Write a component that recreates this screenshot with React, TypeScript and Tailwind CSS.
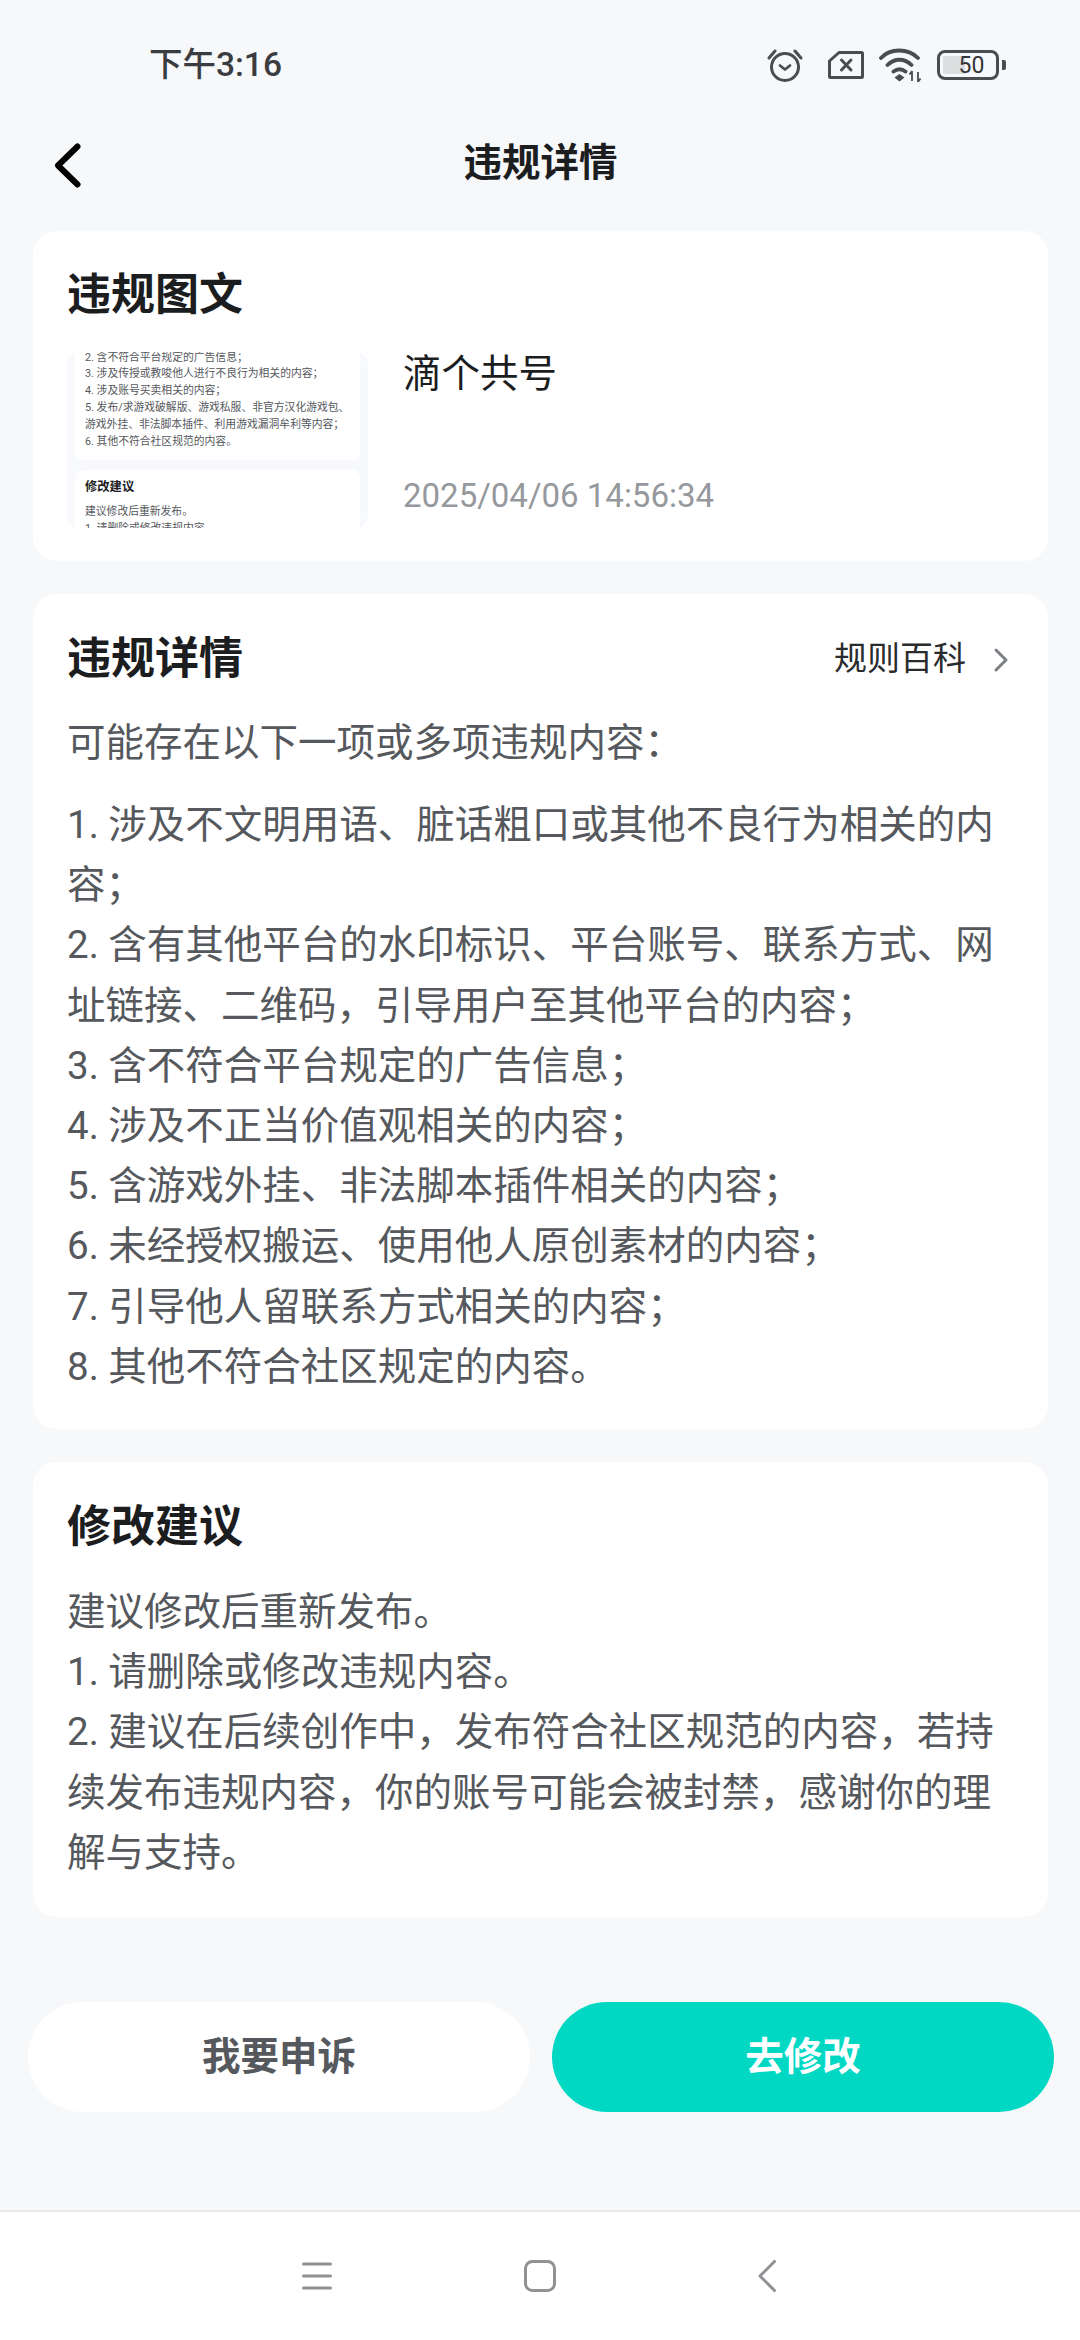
import React from "react";

const font = { fontFamily: '"Roboto", "Noto Sans CJK SC", sans-serif' };

const rules = [
  "1. 涉及不文明用语、脏话粗口或其他不良行为相关的内容；",
  "2. 含有其他平台的水印标识、平台账号、联系方式、网址链接、二维码，引导用户至其他平台的内容；",
  "3. 含不符合平台规定的广告信息；",
  "4. 涉及不正当价值观相关的内容；",
  "5. 含游戏外挂、非法脚本插件相关的内容；",
  "6. 未经授权搬运、使用他人原创素材的内容；",
  "7. 引导他人留联系方式相关的内容；",
  "8. 其他不符合社区规定的内容。",
];

const thumb = [
  "2. 含不符合平台规定的广告信息；",
  "3. 涉及传授或教唆他人进行不良行为相关的内容；",
  "4. 涉及账号买卖相关的内容；",
  "5. 发布/求游戏破解版、游戏私服、非官方汉化游戏包、",
  "游戏外挂、非法脚本插件、利用游戏漏洞牟利等内容；",
  "6. 其他不符合社区规范的内容。",
];

function StatusIcons() {
  return (
    <div className="flex items-center gap-[15px] text-[#4a4c50]">
      <svg width="36" height="35" viewBox="0 0 36 35" fill="none" stroke="currentColor" strokeLinecap="round" strokeLinejoin="round" className="mr-[10px]">
        <circle cx="18" cy="19" r="13.500" strokeWidth="3" />
        <path d="M13 17.500l5 4 5-4" strokeWidth="2.800" />
        <path d="M2 10l6-7M34 10l-6-7" strokeWidth="3" />
      </svg>
      <svg width="36" height="28" viewBox="0 0 36 28" fill="none" stroke="currentColor" strokeWidth="3" strokeLinejoin="round" strokeLinecap="round">
        <path d="M11 1.500h22.500a1 1 0 0 1 1 1v23a1 1 0 0 1-1 1H2.500a1 1 0 0 1-1-1V10z" />
        <path d="M13.500 9l9.500 10M23 9l-9.500 10" />
      </svg>
      <svg width="43" height="34" viewBox="0 0 43 34" fill="none">
        <path d="M2 10C11 0 29 0 39 10M8.500 17c7-7 17-7 24 0M14.500 23.500c4-3 8-3 12 0" stroke="currentColor" strokeWidth="3.800" strokeLinecap="round" />
        <path d="M20.500 26l5 3.500-5 4-5-4z" fill="currentColor" />
        <path d="M33 23v10M39 24v10M33 23l-2.500 3.500M39 34l2.500-3.500" stroke="currentColor" strokeWidth="1.800" />
      </svg>
      <div className="flex items-center">
        <div className="relative flex h-[30px] w-[62px] items-center justify-center rounded-[8px] border-[3.500px] border-[#4a4c50]">
          <div className="absolute left-[3px] top-[3px] bottom-[3px] w-[22px] bg-[#dcdee0]" />
          <span className="relative pl-[7px] text-[23px] leading-none text-[#333538]" style={font}>50</span>
        </div>
        <div className="ml-[3px] h-[10px] w-[4px] rounded-r-[2px] bg-[#4a4c50]" />
      </div>
    </div>
  );
}

export default function App() {
  return (
    <div className="flex h-[2340px] w-[1080px] flex-col overflow-hidden bg-[#f7f8fa]" style={font}>
      <div className="flex h-[128px] items-center justify-between pl-[149px] pr-[74px] pt-[2px]">
        <span className="text-[33.500px] font-medium text-[#3a3c40]">下午3:16</span>
        <StatusIcons />
      </div>

      <div className="relative flex h-[70px] items-center justify-center">
        <svg width="27" height="45" viewBox="0 0 27 45" fill="none" className="absolute left-[54px] top-[15px]">
          <path d="M23.500 3.500L4 22.500l19.500 19" stroke="#000" strokeWidth="6" strokeLinecap="round" strokeLinejoin="round" />
        </svg>
        <span className="pl-[1px] text-[38.500px] font-bold leading-none text-[#1c1d1f]">违规详情</span>
      </div>

      <div className="flex flex-col gap-[33px] pl-[33px] pr-[32px] pt-[33px]">
        <section className="h-[330px] rounded-[24px] bg-white px-[34px] pt-[34px]">
          <h2 className="text-[44px] font-bold leading-[60px] text-[#1c1d1f]">违规图文</h2>
          <div className="mt-[27px] flex">
            <div className="h-[176px] w-[301px] shrink-0 overflow-hidden rounded-[12px] bg-[#f7f9fc] px-[8px]">
              <div className="-mt-[2.400px] rounded-b-[8px] bg-white pb-[10px] pl-[10px]">
                {thumb.map((t) => (
                  <p key={t} className="whitespace-nowrap text-[10.800px] leading-[16.800px] text-[#55585c]">{t}</p>
                ))}
              </div>
              <div className="mt-[10px] rounded-t-[8px] bg-white pl-[10px] pt-[8px]">
                <p className="text-[12.300px] font-bold leading-[18px] text-[#1c1d1f]">修改建议</p>
                <p className="mt-[7.600px] text-[10.800px] leading-[16.800px] text-[#55585c]">建议修改后重新发布。</p>
                <p className="text-[10.800px] leading-[16.800px] text-[#55585c]">1. 请删除或修改违规内容。</p>
              </div>
            </div>
            <div className="ml-[35px] flex h-[176px] flex-col">
              <span className="text-[38.500px] leading-[44px] text-[#1c1d1f]">滴个共号</span>
              <span className="mt-[80px] text-[33px] leading-[40px] text-[#95989c]">2025/04/06 14:56:34</span>
            </div>
          </div>
        </section>

        <section className="h-[835px] rounded-[24px] bg-white px-[34px] pt-[35px]">
          <div className="flex items-center justify-between">
            <h2 className="text-[44px] font-bold leading-[60px] text-[#1c1d1f]">违规详情</h2>
            <div className="flex items-center pr-[5px]">
              <span className="text-[33px] text-[#2a2b2e]">规则百科</span>
              <svg width="16" height="26" viewBox="0 0 16 26" fill="none" className="ml-[27px] mt-[2px]">
                <path d="M3 3l10 10L3 23" stroke="#7c7f83" strokeWidth="3" strokeLinecap="round" strokeLinejoin="round" />
              </svg>
            </div>
          </div>
          <p className="mt-[24px] text-[38.500px] leading-[60px] text-[#55585c]">可能存在以下一项或多项违规内容：</p>
          <div className="mt-[22px]">
            {rules.map((r) => (
              <p key={r} className="text-[38.500px] leading-[60.200px] text-[#55585c]">{r}</p>
            ))}
          </div>
        </section>

        <section className="h-[455px] rounded-[24px] bg-white px-[34px] pt-[35px]">
          <h2 className="text-[44px] font-bold leading-[60px] text-[#1c1d1f]">修改建议</h2>
          <div className="mt-[25px] text-[38.500px] leading-[60.200px] text-[#55585c]">
            <p>建议修改后重新发布。</p>
            <p>1. 请删除或修改违规内容。</p>
            <p>2. 建议在后续创作中，发布符合社区规范的内容，若持续发布违规内容，你的账号可能会被封禁，感谢你的理解与支持。</p>
          </div>
        </section>
      </div>

      <div className="mt-[85px] flex gap-[22px] pl-[28px]">
        <button className="h-[110px] w-[502px] rounded-full bg-white text-[38.500px] font-bold text-[#55585c]">我要申诉</button>
        <button className="h-[110px] w-[502px] rounded-full bg-[#00d8c4] text-[38.500px] font-bold text-white">去修改</button>
      </div>

      <div className="mt-auto flex h-[130px] items-center border-t-[2px] border-[#e8e9eb] bg-white pl-[302px]">
        <svg width="30" height="28" viewBox="0 0 30 28" fill="none" stroke="#8f9194" strokeWidth="3" strokeLinecap="round">
          <path d="M1.500 2h27M1.500 14h27M1.500 26h27" />
        </svg>
        <svg width="32" height="32" viewBox="0 0 32 32" fill="none" stroke="#8f9194" strokeWidth="3" className="ml-[192px]">
          <rect x="1.500" y="1.500" width="29" height="29" rx="7" />
        </svg>
        <svg width="18" height="32" viewBox="0 0 18 32" fill="none" stroke="#8f9194" strokeWidth="3" strokeLinecap="round" strokeLinejoin="round" className="ml-[202px]">
          <path d="M16.500 1.500L2 16l14.500 14.500" />
        </svg>
      </div>
    </div>
  );
}
